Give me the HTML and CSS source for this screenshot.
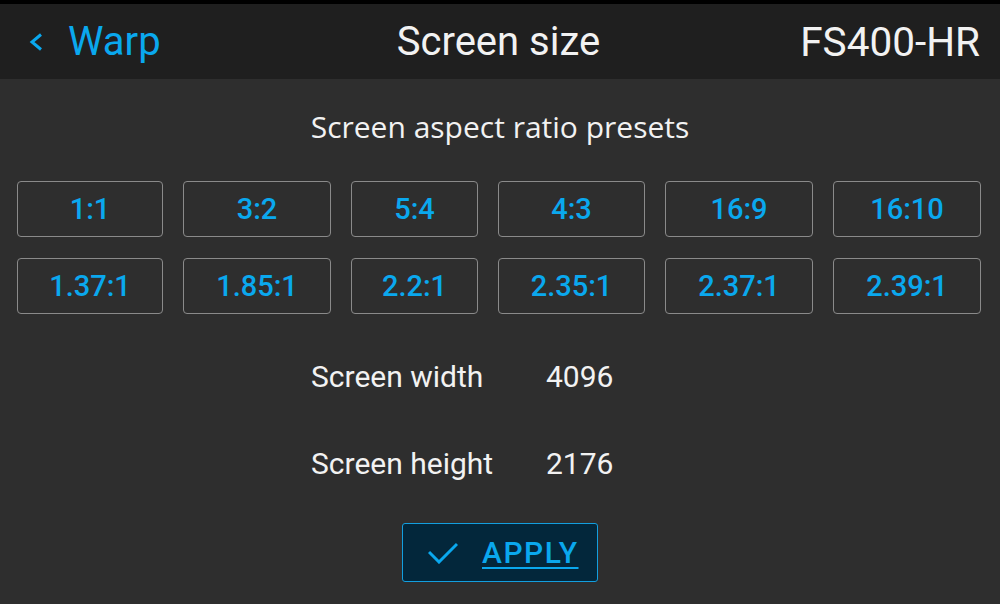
FILE: index.html
```html
<!DOCTYPE html>
<html lang="en">
<head>
  <meta charset="UTF-8" />
  <title>Screen size</title>
  <link rel="stylesheet" href="styles.css">
</head>
<body>

  <!-- Top bar -->
  <div class="header">
    <a class="back" href="#">
      <svg width="14" height="18" viewBox="0 0 14 18"><polyline points="12,1.5 3,9 12,16.5" fill="none" stroke="#0aa8ee" stroke-width="3"/></svg>
      <span>Warp</span>
    </a>
    <div class="title">Screen size</div>
    <div class="device">FS400-HR</div>
  </div>

  <!-- Content -->
  <div class="content">
    <h2 class="section-title">Screen aspect ratio presets</h2>

    <div class="preset-grid">
      <button class="preset">1:1</button>
      <button class="preset">3:2</button>
      <button class="preset">5:4</button>
      <button class="preset">4:3</button>
      <button class="preset">16:9</button>
      <button class="preset">16:10</button>
      <button class="preset">1.37:1</button>
      <button class="preset">1.85:1</button>
      <button class="preset">2.2:1</button>
      <button class="preset">2.35:1</button>
      <button class="preset">2.37:1</button>
      <button class="preset">2.39:1</button>
    </div>

    <div class="fields">
      <span class="label">Screen width</span>
      <span class="value">4096</span>
      <span class="label">Screen height</span>
      <span class="value">2176</span>
    </div>

    <button class="apply-btn">
      <svg width="30" height="22" viewBox="0 0 30 22"><polyline points="1,10 11,20 29,2" fill="none" stroke="#0aa8ee" stroke-width="3"/></svg>
      <span>APPLY</span>
    </button>
  </div>

</body>
</html>
```

FILE: styles.css
```css
* {
  margin: 0;
  padding: 0;
  box-sizing: border-box;
}

body {
  font-family: Roboto, "Liberation Sans", sans-serif;
  background-color: #2e2e2e;
  color: #f2f2f2;
  width: 1000px;
  height: 604px;
  overflow: hidden;
}

/* Header */
.header {
  height: 79px;
  border-top: 4px solid #000;
  background-color: #1f1f1f;
  display: grid;
  grid-template-columns: 1fr auto 1fr;
  align-items: center;
  padding: 0 20px 0 17px;
  font-size: 40px;
  line-height: 40px;
}

.back {
  display: flex;
  align-items: center;
  gap: 25px;
  padding-left: 12px;
  color: #0aa8ee;
  text-decoration: none;
}

.back svg {
  margin-top: 1px;
}

.title {
  text-align: center;
}

.device {
  text-align: right;
  font-size: 40.5px;
}

/* Content */
.content {
  padding-top: 33px;
  display: flex;
  flex-direction: column;
}

.section-title {
  font-family: "Open Sans", sans-serif;
  font-weight: normal;
  font-size: 30px;
  line-height: 30px;
  text-align: center;
}

.preset-grid {
  display: grid;
  grid-template-columns: 146px 148px 127px 147px 148px 148px;
  grid-auto-rows: 56px;
  column-gap: 20px;
  row-gap: 21px;
  margin: 39px 0 0 17px;
}

.preset {
  background: transparent;
  border: 1.5px solid #8a8a8a;
  border-radius: 4px;
  color: #0aa8ee;
  font-family: Roboto, sans-serif;
  font-weight: 500;
  font-size: 29px;
  cursor: pointer;
}

.fields {
  display: grid;
  grid-template-columns: 235px auto;
  row-gap: 57px;
  margin: 48px 0 0 311px;
  font-size: 30px;
  line-height: 30px;
}

.apply-btn {
  align-self: center;
  margin-top: 44px;
  width: 196px;
  height: 59px;
  background-color: #03273b;
  border: 1.5px solid #139fdf;
  border-radius: 3px;
  display: flex;
  align-items: center;
  gap: 24px;
  padding-left: 25px;
  color: #0aa8ee;
  font-family: Roboto, sans-serif;
  font-weight: 500;
  font-size: 30px;
  letter-spacing: 1.5px;
  cursor: pointer;
}

.apply-btn span {
  text-decoration: underline;
  text-decoration-thickness: 2px;
  text-underline-offset: 4px;
}
```
